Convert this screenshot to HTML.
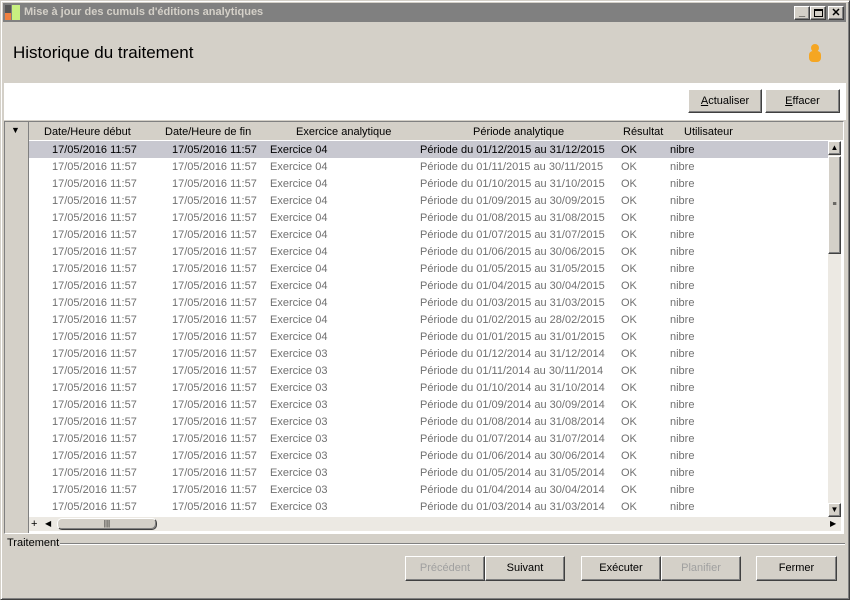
<!DOCTYPE html><html><head><meta charset="utf-8"><style>
*{margin:0;padding:0;box-sizing:border-box}
body{width:850px;height:600px;background:#d4d0c8;font-family:"Liberation Sans",Tahoma,sans-serif;font-size:11px;position:relative;overflow:hidden}
.a{position:absolute;white-space:nowrap}
.btn{position:absolute;background:#d4d0c8;border:1px solid;border-color:#fff #404040 #404040 #fff;box-shadow:inset -1px -1px 0 #808080;text-align:center;font-size:11px}
.dis{color:#a0a0a0}
.row{position:absolute;left:29px;width:799px;height:17px;color:#707070}
.row span{position:absolute;top:3px}
</style></head><body>
<div class="a" style="left:0;top:0;width:850px;height:600px;border:1px solid;border-color:#d4d0c8 #404040 #404040 #d4d0c8;box-shadow:inset 1px 1px 0 #fff,inset -1px -1px 0 #808080"></div>
<div class="a" style="left:3px;top:3px;width:843px;height:19px;background:#808080"></div>
<div class="a" style="left:5px;top:5px;width:6px;height:9px;background:#555"></div>
<div class="a" style="left:5px;top:13px;width:6px;height:7px;background:#f08040"></div>
<div class="a" style="left:12px;top:5px;width:8px;height:15px;background:#c8f080"></div>
<div class="a" style="left:24px;top:6px;color:#d4d0c8;font-weight:bold;font-size:11px">Mise à jour des cumuls d'éditions analytiques</div>
<div class="btn" style="left:794px;top:6px;width:16px;height:14px;line-height:10px;font-weight:bold">_</div>
<div class="btn" style="left:810px;top:6px;width:16px;height:14px"><div class="a" style="left:3px;top:2px;width:9px;height:8px;border:1px solid #000;border-top-width:2px"></div></div>
<div class="btn" style="left:828px;top:6px;width:16px;height:14px;line-height:12px;font-weight:bold">✕</div>
<div class="a" style="left:13px;top:43px;font-size:17px;color:#000">Historique du traitement</div>
<svg class="a" style="left:806px;top:43px" width="18" height="22"><circle cx="9" cy="5" r="4" fill="#f5a623"/><rect x="3" y="8" width="12" height="11" rx="4" fill="#f5a623"/></svg>
<div class="a" style="left:4px;top:83px;width:842px;height:37px;background:#fff"></div>
<div class="btn" style="left:688px;top:89px;width:74px;height:24px;line-height:22px"><u>A</u>ctualiser</div>
<div class="btn" style="left:765px;top:89px;width:75px;height:24px;line-height:22px"><u>E</u>ffacer</div>
<div class="a" style="left:4px;top:121px;width:840px;height:413px;border:1px solid;border-color:#808080 #fff #fff #808080;background:#fff"></div>
<div class="a" style="left:5px;top:122px;width:24px;height:411px;background:#d4d0c8;border-right:1px solid #808080"></div>
<div class="a" style="left:11px;top:125px;font-size:9px">▼</div>
<div class="a" style="left:29px;top:122px;width:814px;height:18px;background:#d4d0c8"></div>
<div class="a" style="left:44px;top:126px">Date/Heure début</div>
<div class="a" style="left:165px;top:126px">Date/Heure de fin</div>
<div class="a" style="left:296px;top:126px">Exercice analytique</div>
<div class="a" style="left:473px;top:126px">Période analytique</div>
<div class="a" style="left:623px;top:126px">Résultat</div>
<div class="a" style="left:684px;top:126px">Utilisateur</div>
<div id="rows"></div>
<div class="a" style="left:828px;top:141px;width:13px;height:376px;background:#ece9e3"></div>
<div class="btn" style="left:828px;top:141px;width:13px;height:14px;font-size:8px;line-height:12px">▲</div>
<div class="btn" style="left:828px;top:156px;width:13px;height:98px;font-size:7px;line-height:96px">≡</div>
<div class="btn" style="left:828px;top:503px;width:13px;height:14px;font-size:8px;line-height:12px">▼</div>
<div class="a" style="left:29px;top:517px;width:812px;height:14px;background:#ece9e3"></div>
<div class="a" style="left:31px;top:518px;font-size:11px">+</div>
<div class="a" style="left:45px;top:517px;font-size:8px;line-height:14px">◀</div>
<div class="btn" style="left:57px;top:518px;width:100px;height:12px;border-radius:5px;font-size:8px;line-height:10px">|||</div>
<div class="a" style="left:830px;top:517px;font-size:8px;line-height:14px">▶</div>
<div class="a" style="left:7px;top:537px">Traitement</div>
<div class="a" style="left:60px;top:543px;width:785px;height:2px;border-top:1px solid #808080;border-bottom:1px solid #fff"></div>
<div class="btn dis" style="left:405px;top:556px;width:80px;height:25px;line-height:23px">Précédent</div>
<div class="btn" style="left:485px;top:556px;width:80px;height:25px;line-height:23px">Suivant</div>
<div class="btn" style="left:581px;top:556px;width:80px;height:25px;line-height:23px">Exécuter</div>
<div class="btn dis" style="left:661px;top:556px;width:80px;height:25px;line-height:23px">Planifier</div>
<div class="btn" style="left:756px;top:556px;width:81px;height:25px;line-height:23px">Fermer</div>
<script>
var last={1:31,2:28,3:31,4:30,5:31,6:30,7:31,8:31,9:30,10:31,11:30,12:31};
var h='',y=2015,m=12;
for(var i=0;i<22;i++){
 var mm=(m<10?'0':'')+m, ex=(y==2015)?'04':'03';
 var st=i==0?'background:#c8c8d0;color:#000;':'';
 h+='<div class="row" style="top:'+(141+i*17)+'px;'+st+'"><span style="left:23px">17/05/2016 11:57</span><span style="left:143px">17/05/2016 11:57</span><span style="left:241px">Exercice '+ex+'</span><span style="left:391px">Période du 01/'+mm+'/'+y+' au '+last[m]+'/'+mm+'/'+y+'</span><span style="left:592px">OK</span><span style="left:641px">nibre</span></div>';
 m--; if(m==0){m=12;y--;}
}
document.getElementById('rows').innerHTML=h;
</script>
</body></html>
